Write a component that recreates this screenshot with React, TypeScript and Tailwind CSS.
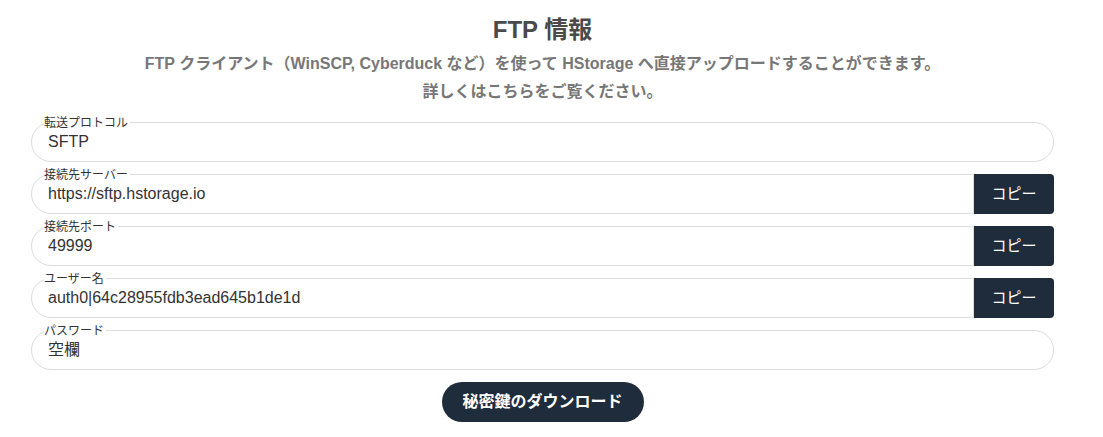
import React from "react";

const font = {
  fontFamily: '"Liberation Sans", Arial, "Noto Sans CJK JP", sans-serif',
};

function Field({ label, value, copy }: { label: string; value: string; copy?: boolean }) {
  return (
    <div className="flex h-10">
      <div
        className={`relative flex flex-1 items-center border border-[#dcdcdc] pl-4 rounded-l-[20px] ${
          copy ? "" : "rounded-r-[20px]"
        }`}
      >
        <span className="absolute -top-[7px] left-[12px] bg-white pr-[2px] text-[12px] leading-[14px] text-[#333]">
          {label}
        </span>
        <span className="text-[16px] text-[#333]">{value}</span>
      </div>
      {copy && (
        <button className="w-[80px] h-10 rounded-r-[4px] bg-[#1f2c3b] text-[15px] text-white">
          コピー
        </button>
      )}
    </div>
  );
}

export default function App() {
  return (
    <div className="min-h-[437px] bg-white" style={font}>
      <div className="ml-[31px] w-[1023px] pt-[14px]">
        <h1 className="text-center text-[24px] leading-[32px] font-bold text-[#4a4a4a]">FTP 情報</h1>
        <p className="mt-[4px] text-center text-[16px] leading-[28px] font-bold text-[#777]">
          FTP クライアント（WinSCP, Cyberduck など）を使って HStorage へ直接アップロードすることができます。
          <br />
          詳しくはこちらをご覧ください。
        </p>
        <div className="mt-[16px] flex flex-col gap-3">
          <Field label="転送プロトコル" value="SFTP" />
          <Field label="接続先サーバー" value="https://sftp.hstorage.io" copy />
          <Field label="接続先ポート" value="49999" copy />
          <Field label="ユーザー名" value="auth0|64c28955fdb3ead645b1de1d" copy />
          <Field label="パスワード" value="空欄" />
        </div>
        <div className="mt-3 flex justify-center">
          <button className="h-10 w-[202px] rounded-full bg-[#1f2c3b] text-[16px] font-bold text-white">
            秘密鍵のダウンロード
          </button>
        </div>
      </div>
    </div>
  );
}
